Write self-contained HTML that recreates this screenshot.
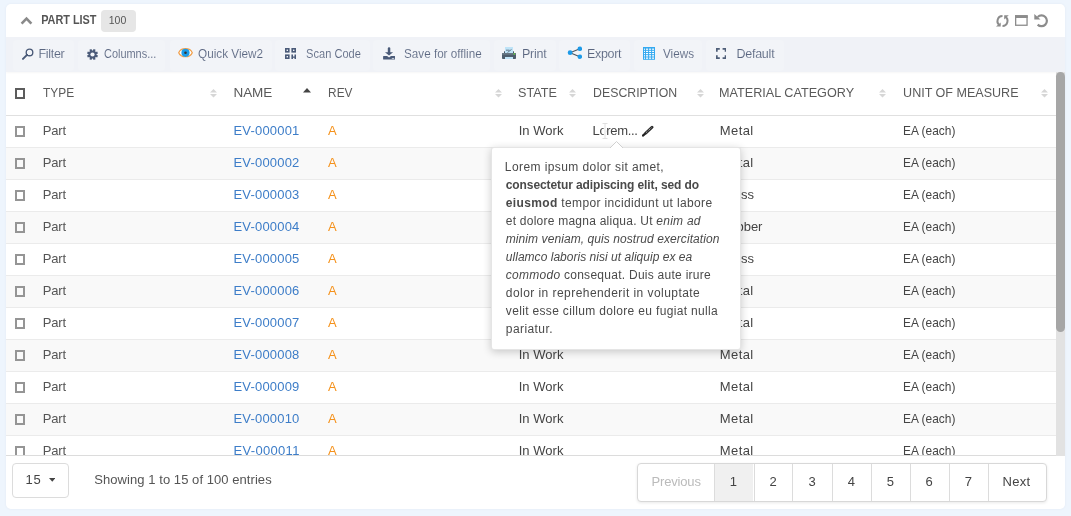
<!DOCTYPE html>
<html><head><meta charset="utf-8">
<style>
*{box-sizing:border-box;margin:0;padding:0}
html,body{width:1071px;height:516px;overflow:hidden;background:#eef5fd;font-family:"Liberation Sans",sans-serif;color:#555}
.card{position:absolute;left:6px;top:4px;width:1059px;height:505px;background:#fff;border-radius:5px;overflow:hidden;box-shadow:0 0 3px rgba(0,40,90,.05)}
.a{position:absolute;white-space:nowrap}
.card{will-change:transform}
</style></head><body>
<div class="card">
<svg class="a" style="left:14px;top:12px" width="13" height="9" viewBox="0 0 13 9"><path d="M1.6 7.6 L6.5 2.6 L11.4 7.6" fill="none" stroke="#8a8a8a" stroke-width="2.6"/></svg>
<div class="a" style="left:34.60px;top:6.05px;font-size:12.5px;font-weight:bold;font-style:normal;letter-spacing:0.000px;color:#555;line-height:20px;transform:scaleX(0.8698);transform-origin:1.00px 0;">PART LIST</div>
<div class="a" style="left:95px;top:6px;width:35px;height:21.5px;background:#e6e6e6;border-radius:4px"></div>
<div class="a" style="left:102.80px;top:6.00px;font-size:10.5px;font-weight:normal;font-style:normal;letter-spacing:-0.050px;color:#555;line-height:20px;">100</div>
<svg class="a" style="left:987px;top:8px" width="60" height="18" viewBox="0 0 60 18">
<g fill="none" stroke="#8c8c8c" stroke-width="2">
<path d="M9.5 4 A5 5 0 0 0 7 13.33"/><path d="M9.5 14 A5 5 0 0 0 12 4.67"/>
<path d="M44.68 4.98 A5.4 5.4 0 1 1 44.68 12.62" stroke-width="2.2"/>
</g>
<path d="M3 14.6 L7.7 14.6 L7.7 10.5 Z M11.2 3.3 L15.8 3.3 L11.2 7.5 Z M41.3 1.9 L41.3 7.5 L47.5 7.5 Z" fill="#8c8c8c"/>
<rect x="22.65" y="3.85" width="11.4" height="9.4" fill="none" stroke="#8c8c8c" stroke-width="1.3"/>
<rect x="22" y="3.2" width="12.7" height="2.8" fill="#8c8c8c"/>
</svg>
<div class="a" style="left:0;top:33.2px;width:1059px;height:35.2px;background:#f0f2f7;box-shadow:0 1px 2px rgba(0,0,0,.035)"></div>
<div class="a" style="left:7px;top:35.5px;width:61px;height:31px;background:#f2f4f8;border-radius:4px"></div>
<div class="a" style="left:72px;top:35.5px;width:87px;height:31px;background:#f2f4f8;border-radius:4px"></div>
<div class="a" style="left:164px;top:35.5px;width:102px;height:31px;background:#f2f4f8;border-radius:4px"></div>
<div class="a" style="left:269px;top:35.5px;width:95px;height:31px;background:#f2f4f8;border-radius:4px"></div>
<div class="a" style="left:367px;top:35.5px;width:117px;height:31px;background:#f2f4f8;border-radius:4px"></div>
<div class="a" style="left:488px;top:35.5px;width:62px;height:31px;background:#f2f4f8;border-radius:4px"></div>
<div class="a" style="left:553px;top:35.5px;width:71px;height:31px;background:#f2f4f8;border-radius:4px"></div>
<div class="a" style="left:628px;top:35.5px;width:67.5px;height:31px;background:#f2f4f8;border-radius:4px"></div>
<div class="a" style="left:699.5px;top:35.5px;width:78.5px;height:31px;background:#f2f4f8;border-radius:4px"></div>
<div class="a" style="left:32.50px;top:40.00px;font-size:12.5px;font-weight:normal;font-style:normal;letter-spacing:-0.300px;color:#5a6680;line-height:20px;-webkit-text-stroke:0.1px #f2f4f8">Filter</div>
<div class="a" style="left:98.40px;top:40.00px;font-size:12.5px;font-weight:normal;font-style:normal;letter-spacing:0.000px;color:#5a6680;line-height:20px;transform:scaleX(0.8746);transform-origin:0.00px 0;-webkit-text-stroke:0.1px #f2f4f8">Columns...</div>
<div class="a" style="left:191.80px;top:40.00px;font-size:12.5px;font-weight:normal;font-style:normal;letter-spacing:0.000px;color:#5a6680;line-height:20px;transform:scaleX(0.9406);transform-origin:0.00px 0;-webkit-text-stroke:0.1px #f2f4f8">Quick View2</div>
<div class="a" style="left:299.80px;top:40.00px;font-size:12.5px;font-weight:normal;font-style:normal;letter-spacing:0.000px;color:#5a6680;line-height:20px;transform:scaleX(0.8852);transform-origin:1.00px 0;-webkit-text-stroke:0.1px #f2f4f8">Scan Code</div>
<div class="a" style="left:397.90px;top:40.00px;font-size:12.5px;font-weight:normal;font-style:normal;letter-spacing:0.000px;color:#5a6680;line-height:20px;transform:scaleX(0.9329);transform-origin:1.00px 0;-webkit-text-stroke:0.1px #f2f4f8">Save for offline</div>
<div class="a" style="left:516.00px;top:40.00px;font-size:12.5px;font-weight:normal;font-style:normal;letter-spacing:-0.275px;color:#5a6680;line-height:20px;-webkit-text-stroke:0.1px #f2f4f8">Print</div>
<div class="a" style="left:581.00px;top:40.00px;font-size:12.5px;font-weight:normal;font-style:normal;letter-spacing:-0.320px;color:#5a6680;line-height:20px;-webkit-text-stroke:0.1px #f2f4f8">Export</div>
<div class="a" style="left:656.50px;top:40.00px;font-size:12.5px;font-weight:normal;font-style:normal;letter-spacing:0.000px;color:#5a6680;line-height:20px;transform:scaleX(0.9364);transform-origin:0.00px 0;-webkit-text-stroke:0.1px #f2f4f8">Views</div>
<div class="a" style="left:730.40px;top:40.00px;font-size:12.5px;font-weight:normal;font-style:normal;letter-spacing:-0.233px;color:#5a6680;line-height:20px;-webkit-text-stroke:0.1px #f2f4f8">Default</div>
<svg class="a" style="left:15px;top:43px" width="13" height="13" viewBox="0 0 13 13"><circle cx="8.5" cy="5.4" r="3.3" fill="none" stroke="#4a5a78" stroke-width="1.35"/><path d="M6 7.9 L2 11.9" stroke="#4a5a78" stroke-width="2" stroke-linecap="round"/></svg>
<svg class="a" style="left:80.8px;top:45px" width="11" height="11" viewBox="0 0 11 11"><g fill="#4a5a78"><circle cx="5.5" cy="5.5" r="4"/><rect x="4.4" y="0" width="2.2" height="11" transform="rotate(22.5 5.5 5.5)"/><rect x="4.4" y="0" width="2.2" height="11" transform="rotate(67.5 5.5 5.5)"/><rect x="4.4" y="0" width="2.2" height="11" transform="rotate(112.5 5.5 5.5)"/><rect x="4.4" y="0" width="2.2" height="11" transform="rotate(157.5 5.5 5.5)"/></g><circle cx="5.5" cy="5.5" r="2.1" fill="#f2f4f8"/></svg>
<svg class="a" style="left:171.5px;top:43.2px" width="15" height="11.4" viewBox="0 0 15 11.4"><path d="M0.7 5.7 C3 0.3, 12 0.3, 14.3 5.7 C12 11.1, 3 11.1, 0.7 5.7 Z" fill="#fff" stroke="#f2a04c" stroke-width="1.2"/><circle cx="7.5" cy="5.8" r="4.1" fill="#1c9ce8"/><circle cx="7.5" cy="5.8" r="1.3" fill="#333"/></svg>
<svg class="a" style="left:279px;top:44px" width="11" height="11" viewBox="0 0 11 11"><g fill="#4a5a78"><rect x="0" y="0" width="4.6" height="4.6"/><rect x="6.4" y="0" width="4.6" height="4.6"/><rect x="0" y="6.4" width="4.6" height="4.6"/><path d="M6.4 6.4 H8 V8.5 H9.5 V6.4 H11 V11 H9.5 V9.8 H8 V11 H6.4 Z"/></g><g fill="#f2f4f8"><rect x="1.6" y="1.6" width="1.4" height="1.4"/><rect x="8" y="1.6" width="1.4" height="1.4"/><rect x="1.6" y="8" width="1.4" height="1.4"/></g></svg>
<svg class="a" style="left:376.8px;top:43px" width="12.2" height="12.7" viewBox="0 0 12.2 12.7"><path d="M4.8 0.9 Q4.8 0.2 6.05 0.2 Q7.3 0.2 7.3 0.9 V5.3 H10.1 L6.05 8.6 L2 5.3 H4.8 Z" fill="#4a5a78"/><path d="M0.6 9 H4.1 L6.05 10.4 L8 9 H11.6 Q12.1 9 12.1 9.5 V12.1 Q12.1 12.6 11.6 12.6 H0.6 Q0.1 12.6 0.1 12.1 V9.5 Q0.1 9 0.6 9 Z" fill="#4a5a78"/><rect x="8.8" y="11" width="2.4" height="0.9" fill="#c8d0dc"/></svg>
<svg class="a" style="left:496px;top:42.8px" width="14" height="12.4" viewBox="0 0 14 12.4"><rect x="3" y="0" width="8" height="7" fill="#bfe4f8"/><path d="M4 3.2 H7.5 M5.5 5.5 L9.5 2.5" stroke="#506070" stroke-width="0.8"/><rect x="2" y="4.3" width="1" height="2" fill="#455565"/><rect x="11" y="4.3" width="1" height="2" fill="#455565"/><rect x="0" y="6.1" width="14" height="6" rx="1" fill="#4d5d6c"/><rect x="0" y="6.1" width="14" height="1.6" fill="#6a7a88"/><rect x="3" y="10" width="8" height="2" fill="#bfe4f8"/><circle cx="12.3" cy="6.9" r="0.9" fill="#5cc040"/></svg>
<svg class="a" style="left:561px;top:42.2px" width="15" height="13.5" viewBox="0 0 15 13.5"><path d="M3.1 6.7 L12.8 2.8 M3.1 6.7 L12.8 10.7" stroke="#4a5560" stroke-width="1.1"/><circle cx="3.1" cy="6.7" r="2.4" fill="#1c9ae8"/><circle cx="12.8" cy="2.8" r="2.3" fill="#1c9ae8"/><circle cx="12.8" cy="10.7" r="2.3" fill="#1c9ae8"/></svg>
<svg class="a" style="left:637px;top:42.8px" width="12" height="12.8" viewBox="0 0 12 12.8"><rect x="0" y="0" width="12" height="12.8" fill="#fff"/><g stroke="#36aaf0" stroke-width="1" fill="none"><rect x="0.5" y="0.5" width="11" height="11.8"/><path d="M2.5 0.5 V12.3"/><path d="M5.6 0.5 V12.3"/><path d="M8.6 0.5 V12.3"/><path d="M0.5 3.3 H11.5"/><path d="M0.5 5.5 H11.5"/><path d="M0.5 7.7 H11.5"/><path d="M0.5 10 H11.5"/></g><rect x="0" y="0" width="12" height="1.6" fill="#36aaf0"/></svg>
<svg class="a" style="left:709.8px;top:44px" width="10.4" height="11" viewBox="0 0 10.4 11"><path d="M0.85 3.8 V0.85 H3.8 M6.6 0.85 H9.55 V3.8 M9.55 7.2 V10.15 H6.6 M3.8 10.15 H0.85 V7.2" fill="none" stroke="#4f5e78" stroke-width="1.7"/></svg>
<div class="a" style="left:9px;top:84px;width:10.3px;height:10.6px;border:2px solid #5c5c5c"></div>
<div class="a" style="left:37.10px;top:79.00px;font-size:13.5px;font-weight:normal;font-style:normal;letter-spacing:0.000px;color:#5a5a5a;line-height:20px;transform:scaleX(0.8829);transform-origin:0.00px 0;">TYPE</div>
<svg class="a" style="left:204.3px;top:85px" width="7" height="8.5" viewBox="0 0 7 8.5"><path d="M3.5 0 L7 3.6 L0 3.6 Z M0 4.9 L7 4.9 L3.5 8.5 Z" fill="#d6d6d6"/></svg>
<div class="a" style="left:227.50px;top:79.00px;font-size:13.5px;font-weight:normal;font-style:normal;letter-spacing:-0.067px;color:#5a5a5a;line-height:20px;">NAME</div>
<div class="a" style="left:321.80px;top:79.00px;font-size:13.5px;font-weight:normal;font-style:normal;letter-spacing:0.000px;color:#5a5a5a;line-height:20px;transform:scaleX(0.8778);transform-origin:1.00px 0;">REV</div>
<svg class="a" style="left:488.5px;top:85px" width="7" height="8.5" viewBox="0 0 7 8.5"><path d="M3.5 0 L7 3.6 L0 3.6 Z M0 4.9 L7 4.9 L3.5 8.5 Z" fill="#d6d6d6"/></svg>
<div class="a" style="left:512.30px;top:79.00px;font-size:13.5px;font-weight:normal;font-style:normal;letter-spacing:0.000px;color:#5a5a5a;line-height:20px;transform:scaleX(0.9350);transform-origin:1.00px 0;">STATE</div>
<svg class="a" style="left:563.4px;top:85px" width="7" height="8.5" viewBox="0 0 7 8.5"><path d="M3.5 0 L7 3.6 L0 3.6 Z M0 4.9 L7 4.9 L3.5 8.5 Z" fill="#d6d6d6"/></svg>
<div class="a" style="left:586.70px;top:79.00px;font-size:13.5px;font-weight:normal;font-style:normal;letter-spacing:0.000px;color:#5a5a5a;line-height:20px;transform:scaleX(0.9110);transform-origin:1.00px 0;">DESCRIPTION</div>
<svg class="a" style="left:690.7px;top:85px" width="7" height="8.5" viewBox="0 0 7 8.5"><path d="M3.5 0 L7 3.6 L0 3.6 Z M0 4.9 L7 4.9 L3.5 8.5 Z" fill="#d6d6d6"/></svg>
<div class="a" style="left:713.40px;top:79.00px;font-size:13.5px;font-weight:normal;font-style:normal;letter-spacing:0.000px;color:#5a5a5a;line-height:20px;transform:scaleX(0.9357);transform-origin:1.00px 0;">MATERIAL CATEGORY</div>
<svg class="a" style="left:873.4px;top:85px" width="7" height="8.5" viewBox="0 0 7 8.5"><path d="M3.5 0 L7 3.6 L0 3.6 Z M0 4.9 L7 4.9 L3.5 8.5 Z" fill="#d6d6d6"/></svg>
<div class="a" style="left:896.50px;top:79.00px;font-size:13.5px;font-weight:normal;font-style:normal;letter-spacing:0.000px;color:#5a5a5a;line-height:20px;transform:scaleX(0.9293);transform-origin:1.00px 0;">UNIT OF MEASURE</div>
<svg class="a" style="left:1035.1px;top:85px" width="7" height="8.5" viewBox="0 0 7 8.5"><path d="M3.5 0 L7 3.6 L0 3.6 Z M0 4.9 L7 4.9 L3.5 8.5 Z" fill="#d6d6d6"/></svg>
<svg class="a" style="left:297.4px;top:84.3px" width="8" height="4.5" viewBox="0 0 8 4.5"><path d="M4 0 L8 4.5 L0 4.5 Z" fill="#444"/></svg>
<div class="a" style="left:0;top:110.5px;width:1050px;height:1px;background:#e0e0e0"></div>
<div class="a" style="left:0;top:111.5px;width:1050px;height:339.5px;overflow:hidden">
<div class="a" style="left:0;top:0px;width:1050px;height:32px;background:#fff;border-bottom:1px solid #ebebeb"></div>
<div class="a" style="left:9px;top:10.5px;width:10px;height:10.5px;border:2px solid #959595"></div>
<div class="a" style="left:36.70px;top:5.60px;font-size:13px;font-weight:normal;font-style:normal;letter-spacing:-0.167px;color:#555;line-height:20px;">Part</div>
<div class="a" style="left:227.50px;top:5.60px;font-size:13px;font-weight:normal;font-style:normal;letter-spacing:0.188px;color:#3d7dc8;line-height:20px;">EV-000001</div>
<div class="a" style="left:321.90px;top:5.60px;font-size:13px;font-weight:normal;font-style:normal;letter-spacing:0.000px;color:#f5921c;line-height:20px;">A</div>
<div class="a" style="left:512.70px;top:5.60px;font-size:13px;font-weight:normal;font-style:normal;letter-spacing:0.033px;color:#444;line-height:20px;">In Work</div>
<div class="a" style="left:586.60px;top:5.60px;font-size:13px;font-weight:normal;font-style:normal;letter-spacing:-0.343px;color:#444;line-height:20px;">Lorem...</div>
<svg class="a" style="left:636px;top:9.5px" width="12" height="12" viewBox="0 0 12 12"><path d="M0.9 10.6 L2.6 9.1" stroke="#222" stroke-width="2.2" stroke-linecap="round"/><path d="M3.6 8.2 L10 2.3" stroke="#2a2a2a" stroke-width="2.9" stroke-linecap="round"/><path d="M4.2 7.5 L9.4 2.7" stroke="#ccc" stroke-width="0.9" stroke-dasharray="1.1 0.9"/></svg>
<svg class="a" style="left:594px;top:6.5px" width="10" height="18" viewBox="0 0 10 18"><path d="M2 1.5 H8 M5 1.5 V16.5 M2 16.5 H8" fill="none" stroke="#fff" stroke-width="2.6"/><path d="M2.5 1.5 H7.5 M5 1.5 V16.5 M2.5 16.5 H7.5" fill="none" stroke="#d8d8d8" stroke-width="0.8"/></svg>
<div class="a" style="left:713.80px;top:5.60px;font-size:13px;font-weight:normal;font-style:normal;letter-spacing:0.400px;color:#444;line-height:20px;">Metal</div>
<div class="a" style="left:896.80px;top:5.60px;font-size:13px;font-weight:normal;font-style:normal;letter-spacing:0.000px;color:#444;line-height:20px;transform:scaleX(0.9161);transform-origin:1.00px 0;">EA (each)</div>
<div class="a" style="left:0;top:32px;width:1050px;height:32px;background:#f9f9f9;border-bottom:1px solid #ebebeb"></div>
<div class="a" style="left:9px;top:42.5px;width:10px;height:10.5px;border:2px solid #959595"></div>
<div class="a" style="left:36.70px;top:37.60px;font-size:13px;font-weight:normal;font-style:normal;letter-spacing:-0.167px;color:#555;line-height:20px;">Part</div>
<div class="a" style="left:227.50px;top:37.60px;font-size:13px;font-weight:normal;font-style:normal;letter-spacing:0.188px;color:#3d7dc8;line-height:20px;">EV-000002</div>
<div class="a" style="left:321.90px;top:37.60px;font-size:13px;font-weight:normal;font-style:normal;letter-spacing:0.000px;color:#f5921c;line-height:20px;">A</div>
<div class="a" style="left:512.70px;top:37.60px;font-size:13px;font-weight:normal;font-style:normal;letter-spacing:0.033px;color:#444;line-height:20px;">In Work</div>
<div class="a" style="left:713.80px;top:37.60px;font-size:13px;font-weight:normal;font-style:normal;letter-spacing:0.400px;color:#444;line-height:20px;">Metal</div>
<div class="a" style="left:896.80px;top:37.60px;font-size:13px;font-weight:normal;font-style:normal;letter-spacing:0.000px;color:#444;line-height:20px;transform:scaleX(0.9161);transform-origin:1.00px 0;">EA (each)</div>
<div class="a" style="left:0;top:64px;width:1050px;height:32px;background:#fff;border-bottom:1px solid #ebebeb"></div>
<div class="a" style="left:9px;top:74.5px;width:10px;height:10.5px;border:2px solid #959595"></div>
<div class="a" style="left:36.70px;top:69.60px;font-size:13px;font-weight:normal;font-style:normal;letter-spacing:-0.167px;color:#555;line-height:20px;">Part</div>
<div class="a" style="left:227.50px;top:69.60px;font-size:13px;font-weight:normal;font-style:normal;letter-spacing:0.188px;color:#3d7dc8;line-height:20px;">EV-000003</div>
<div class="a" style="left:321.90px;top:69.60px;font-size:13px;font-weight:normal;font-style:normal;letter-spacing:0.000px;color:#f5921c;line-height:20px;">A</div>
<div class="a" style="left:512.70px;top:69.60px;font-size:13px;font-weight:normal;font-style:normal;letter-spacing:0.033px;color:#444;line-height:20px;">In Work</div>
<div class="a" style="left:714.80px;top:69.60px;font-size:13px;font-weight:normal;font-style:normal;letter-spacing:0.000px;color:#444;line-height:20px;">Glass</div>
<div class="a" style="left:896.80px;top:69.60px;font-size:13px;font-weight:normal;font-style:normal;letter-spacing:0.000px;color:#444;line-height:20px;transform:scaleX(0.9161);transform-origin:1.00px 0;">EA (each)</div>
<div class="a" style="left:0;top:96px;width:1050px;height:32px;background:#f9f9f9;border-bottom:1px solid #ebebeb"></div>
<div class="a" style="left:9px;top:106.5px;width:10px;height:10.5px;border:2px solid #959595"></div>
<div class="a" style="left:36.70px;top:101.60px;font-size:13px;font-weight:normal;font-style:normal;letter-spacing:-0.167px;color:#555;line-height:20px;">Part</div>
<div class="a" style="left:227.50px;top:101.60px;font-size:13px;font-weight:normal;font-style:normal;letter-spacing:0.188px;color:#3d7dc8;line-height:20px;">EV-000004</div>
<div class="a" style="left:321.90px;top:101.60px;font-size:13px;font-weight:normal;font-style:normal;letter-spacing:0.000px;color:#f5921c;line-height:20px;">A</div>
<div class="a" style="left:512.70px;top:101.60px;font-size:13px;font-weight:normal;font-style:normal;letter-spacing:0.033px;color:#444;line-height:20px;">In Work</div>
<div class="a" style="left:713.80px;top:101.60px;font-size:13px;font-weight:normal;font-style:normal;letter-spacing:0.000px;color:#444;line-height:20px;">Rubber</div>
<div class="a" style="left:896.80px;top:101.60px;font-size:13px;font-weight:normal;font-style:normal;letter-spacing:0.000px;color:#444;line-height:20px;transform:scaleX(0.9161);transform-origin:1.00px 0;">EA (each)</div>
<div class="a" style="left:0;top:128px;width:1050px;height:32px;background:#fff;border-bottom:1px solid #ebebeb"></div>
<div class="a" style="left:9px;top:138.5px;width:10px;height:10.5px;border:2px solid #959595"></div>
<div class="a" style="left:36.70px;top:133.60px;font-size:13px;font-weight:normal;font-style:normal;letter-spacing:-0.167px;color:#555;line-height:20px;">Part</div>
<div class="a" style="left:227.50px;top:133.60px;font-size:13px;font-weight:normal;font-style:normal;letter-spacing:0.188px;color:#3d7dc8;line-height:20px;">EV-000005</div>
<div class="a" style="left:321.90px;top:133.60px;font-size:13px;font-weight:normal;font-style:normal;letter-spacing:0.000px;color:#f5921c;line-height:20px;">A</div>
<div class="a" style="left:512.70px;top:133.60px;font-size:13px;font-weight:normal;font-style:normal;letter-spacing:0.033px;color:#444;line-height:20px;">In Work</div>
<div class="a" style="left:714.80px;top:133.60px;font-size:13px;font-weight:normal;font-style:normal;letter-spacing:0.000px;color:#444;line-height:20px;">Glass</div>
<div class="a" style="left:896.80px;top:133.60px;font-size:13px;font-weight:normal;font-style:normal;letter-spacing:0.000px;color:#444;line-height:20px;transform:scaleX(0.9161);transform-origin:1.00px 0;">EA (each)</div>
<div class="a" style="left:0;top:160px;width:1050px;height:32px;background:#f9f9f9;border-bottom:1px solid #ebebeb"></div>
<div class="a" style="left:9px;top:170.5px;width:10px;height:10.5px;border:2px solid #959595"></div>
<div class="a" style="left:36.70px;top:165.60px;font-size:13px;font-weight:normal;font-style:normal;letter-spacing:-0.167px;color:#555;line-height:20px;">Part</div>
<div class="a" style="left:227.50px;top:165.60px;font-size:13px;font-weight:normal;font-style:normal;letter-spacing:0.188px;color:#3d7dc8;line-height:20px;">EV-000006</div>
<div class="a" style="left:321.90px;top:165.60px;font-size:13px;font-weight:normal;font-style:normal;letter-spacing:0.000px;color:#f5921c;line-height:20px;">A</div>
<div class="a" style="left:512.70px;top:165.60px;font-size:13px;font-weight:normal;font-style:normal;letter-spacing:0.033px;color:#444;line-height:20px;">In Work</div>
<div class="a" style="left:713.80px;top:165.60px;font-size:13px;font-weight:normal;font-style:normal;letter-spacing:0.400px;color:#444;line-height:20px;">Metal</div>
<div class="a" style="left:896.80px;top:165.60px;font-size:13px;font-weight:normal;font-style:normal;letter-spacing:0.000px;color:#444;line-height:20px;transform:scaleX(0.9161);transform-origin:1.00px 0;">EA (each)</div>
<div class="a" style="left:0;top:192px;width:1050px;height:32px;background:#fff;border-bottom:1px solid #ebebeb"></div>
<div class="a" style="left:9px;top:202.5px;width:10px;height:10.5px;border:2px solid #959595"></div>
<div class="a" style="left:36.70px;top:197.60px;font-size:13px;font-weight:normal;font-style:normal;letter-spacing:-0.167px;color:#555;line-height:20px;">Part</div>
<div class="a" style="left:227.50px;top:197.60px;font-size:13px;font-weight:normal;font-style:normal;letter-spacing:0.188px;color:#3d7dc8;line-height:20px;">EV-000007</div>
<div class="a" style="left:321.90px;top:197.60px;font-size:13px;font-weight:normal;font-style:normal;letter-spacing:0.000px;color:#f5921c;line-height:20px;">A</div>
<div class="a" style="left:512.70px;top:197.60px;font-size:13px;font-weight:normal;font-style:normal;letter-spacing:0.033px;color:#444;line-height:20px;">In Work</div>
<div class="a" style="left:713.80px;top:197.60px;font-size:13px;font-weight:normal;font-style:normal;letter-spacing:0.400px;color:#444;line-height:20px;">Metal</div>
<div class="a" style="left:896.80px;top:197.60px;font-size:13px;font-weight:normal;font-style:normal;letter-spacing:0.000px;color:#444;line-height:20px;transform:scaleX(0.9161);transform-origin:1.00px 0;">EA (each)</div>
<div class="a" style="left:0;top:224px;width:1050px;height:32px;background:#f9f9f9;border-bottom:1px solid #ebebeb"></div>
<div class="a" style="left:9px;top:234.5px;width:10px;height:10.5px;border:2px solid #959595"></div>
<div class="a" style="left:36.70px;top:229.60px;font-size:13px;font-weight:normal;font-style:normal;letter-spacing:-0.167px;color:#555;line-height:20px;">Part</div>
<div class="a" style="left:227.50px;top:229.60px;font-size:13px;font-weight:normal;font-style:normal;letter-spacing:0.188px;color:#3d7dc8;line-height:20px;">EV-000008</div>
<div class="a" style="left:321.90px;top:229.60px;font-size:13px;font-weight:normal;font-style:normal;letter-spacing:0.000px;color:#f5921c;line-height:20px;">A</div>
<div class="a" style="left:512.70px;top:229.60px;font-size:13px;font-weight:normal;font-style:normal;letter-spacing:0.033px;color:#444;line-height:20px;">In Work</div>
<div class="a" style="left:713.80px;top:229.60px;font-size:13px;font-weight:normal;font-style:normal;letter-spacing:0.400px;color:#444;line-height:20px;">Metal</div>
<div class="a" style="left:896.80px;top:229.60px;font-size:13px;font-weight:normal;font-style:normal;letter-spacing:0.000px;color:#444;line-height:20px;transform:scaleX(0.9161);transform-origin:1.00px 0;">EA (each)</div>
<div class="a" style="left:0;top:256px;width:1050px;height:32px;background:#fff;border-bottom:1px solid #ebebeb"></div>
<div class="a" style="left:9px;top:266.5px;width:10px;height:10.5px;border:2px solid #959595"></div>
<div class="a" style="left:36.70px;top:261.60px;font-size:13px;font-weight:normal;font-style:normal;letter-spacing:-0.167px;color:#555;line-height:20px;">Part</div>
<div class="a" style="left:227.50px;top:261.60px;font-size:13px;font-weight:normal;font-style:normal;letter-spacing:0.188px;color:#3d7dc8;line-height:20px;">EV-000009</div>
<div class="a" style="left:321.90px;top:261.60px;font-size:13px;font-weight:normal;font-style:normal;letter-spacing:0.000px;color:#f5921c;line-height:20px;">A</div>
<div class="a" style="left:512.70px;top:261.60px;font-size:13px;font-weight:normal;font-style:normal;letter-spacing:0.033px;color:#444;line-height:20px;">In Work</div>
<div class="a" style="left:713.80px;top:261.60px;font-size:13px;font-weight:normal;font-style:normal;letter-spacing:0.400px;color:#444;line-height:20px;">Metal</div>
<div class="a" style="left:896.80px;top:261.60px;font-size:13px;font-weight:normal;font-style:normal;letter-spacing:0.000px;color:#444;line-height:20px;transform:scaleX(0.9161);transform-origin:1.00px 0;">EA (each)</div>
<div class="a" style="left:0;top:288px;width:1050px;height:32px;background:#f9f9f9;border-bottom:1px solid #ebebeb"></div>
<div class="a" style="left:9px;top:298.5px;width:10px;height:10.5px;border:2px solid #959595"></div>
<div class="a" style="left:36.70px;top:293.60px;font-size:13px;font-weight:normal;font-style:normal;letter-spacing:-0.167px;color:#555;line-height:20px;">Part</div>
<div class="a" style="left:227.50px;top:293.60px;font-size:13px;font-weight:normal;font-style:normal;letter-spacing:0.188px;color:#3d7dc8;line-height:20px;">EV-000010</div>
<div class="a" style="left:321.90px;top:293.60px;font-size:13px;font-weight:normal;font-style:normal;letter-spacing:0.000px;color:#f5921c;line-height:20px;">A</div>
<div class="a" style="left:512.70px;top:293.60px;font-size:13px;font-weight:normal;font-style:normal;letter-spacing:0.033px;color:#444;line-height:20px;">In Work</div>
<div class="a" style="left:713.80px;top:293.60px;font-size:13px;font-weight:normal;font-style:normal;letter-spacing:0.400px;color:#444;line-height:20px;">Metal</div>
<div class="a" style="left:896.80px;top:293.60px;font-size:13px;font-weight:normal;font-style:normal;letter-spacing:0.000px;color:#444;line-height:20px;transform:scaleX(0.9161);transform-origin:1.00px 0;">EA (each)</div>
<div class="a" style="left:0;top:320px;width:1050px;height:32px;background:#fff;border-bottom:1px solid #ebebeb"></div>
<div class="a" style="left:9px;top:330.5px;width:10px;height:10.5px;border:2px solid #959595"></div>
<div class="a" style="left:36.70px;top:325.60px;font-size:13px;font-weight:normal;font-style:normal;letter-spacing:-0.167px;color:#555;line-height:20px;">Part</div>
<div class="a" style="left:227.50px;top:325.60px;font-size:13px;font-weight:normal;font-style:normal;letter-spacing:0.312px;color:#3d7dc8;line-height:20px;">EV-000011</div>
<div class="a" style="left:321.90px;top:325.60px;font-size:13px;font-weight:normal;font-style:normal;letter-spacing:0.000px;color:#f5921c;line-height:20px;">A</div>
<div class="a" style="left:512.70px;top:325.60px;font-size:13px;font-weight:normal;font-style:normal;letter-spacing:0.033px;color:#444;line-height:20px;">In Work</div>
<div class="a" style="left:713.80px;top:325.60px;font-size:13px;font-weight:normal;font-style:normal;letter-spacing:0.400px;color:#444;line-height:20px;">Metal</div>
<div class="a" style="left:896.80px;top:325.60px;font-size:13px;font-weight:normal;font-style:normal;letter-spacing:0.000px;color:#444;line-height:20px;transform:scaleX(0.9161);transform-origin:1.00px 0;">EA (each)</div>
</div>
<div class="a" style="left:0;top:451px;width:1050px;height:1px;background:#dcdcdc"></div>
<div class="a" style="left:1050px;top:68px;width:9px;height:384px;background:#e2e2e2"></div>
<div class="a" style="left:1050px;top:68px;width:9px;height:259.5px;background:#a6a6a6;border-radius:4.5px"></div>
<div class="a" style="left:485px;top:143px;width:249.5px;height:203.3px;background:#fff;border:1px solid rgba(0,0,0,.10);border-radius:3px;box-shadow:0 2px 8px rgba(0,0,0,.20)"></div>
<svg class="a" style="left:603px;top:137px" width="15" height="8" viewBox="0 0 15 8"><path d="M0.5 7.5 L7.5 0.5 L14.5 7.5" fill="#fff" stroke="#d0d0d0" stroke-width="1"/><rect x="0" y="7" width="15" height="2" fill="#fff"/></svg>
<div class="a" style="left:498.80px;top:152.80px;font-size:12px;font-weight:normal;font-style:normal;letter-spacing:0.415px;color:#4a4a4a;line-height:20px;">Lorem ipsum dolor sit amet,</div>
<div class="a" style="left:499.80px;top:170.80px;font-size:12px;font-weight:normal;font-style:normal;letter-spacing:-0.100px;color:#4a4a4a;line-height:20px;"><b>consectetur adipiscing elit, sed do</b></div>
<div class="a" style="left:499.80px;top:188.80px;font-size:12px;font-weight:normal;font-style:normal;letter-spacing:0.359px;color:#4a4a4a;line-height:20px;"><b>eiusmod</b> tempor incididunt ut labore</div>
<div class="a" style="left:499.80px;top:206.80px;font-size:12px;font-weight:normal;font-style:normal;letter-spacing:0.239px;color:#4a4a4a;line-height:20px;">et dolore magna aliqua. Ut <i>enim ad</i></div>
<div class="a" style="left:499.80px;top:224.80px;font-size:12px;font-weight:normal;font-style:normal;letter-spacing:0.074px;color:#4a4a4a;line-height:20px;"><i>minim veniam, quis nostrud exercitation</i></div>
<div class="a" style="left:499.80px;top:242.80px;font-size:12px;font-weight:normal;font-style:normal;letter-spacing:0.028px;color:#4a4a4a;line-height:20px;"><i>ullamco laboris nisi ut aliquip ex ea</i></div>
<div class="a" style="left:499.80px;top:260.80px;font-size:12px;font-weight:normal;font-style:normal;letter-spacing:0.267px;color:#4a4a4a;line-height:20px;"><i>commodo</i> consequat. Duis aute irure</div>
<div class="a" style="left:499.80px;top:278.80px;font-size:12px;font-weight:normal;font-style:normal;letter-spacing:0.447px;color:#4a4a4a;line-height:20px;">dolor in reprehenderit in voluptate</div>
<div class="a" style="left:499.80px;top:296.80px;font-size:12px;font-weight:normal;font-style:normal;letter-spacing:0.338px;color:#4a4a4a;line-height:20px;">velit esse cillum dolore eu fugiat nulla</div>
<div class="a" style="left:499.80px;top:314.80px;font-size:12px;font-weight:normal;font-style:normal;letter-spacing:0.413px;color:#4a4a4a;line-height:20px;">pariatur.</div>
<div class="a" style="left:6.300000000000001px;top:459px;width:56.5px;height:35px;border:1px solid #dcdcdc;border-radius:4px"></div>
<div class="a" style="left:19.50px;top:465.90px;font-size:13px;font-weight:normal;font-style:normal;letter-spacing:0.700px;color:#444;line-height:20px;">15</div>
<svg class="a" style="left:42.9px;top:474.3px" width="6.5" height="3.7" viewBox="0 0 6.5 3.7"><path d="M0 0 H6.5 L3.25 3.7 Z" fill="#444"/></svg>
<div class="a" style="left:88.30px;top:465.90px;font-size:13px;font-weight:normal;font-style:normal;letter-spacing:0.059px;color:#555;line-height:20px;">Showing 1 to 15 of 100 entries</div>
<div class="a" style="left:630.5px;top:459.3px;width:410.0px;height:38.6px;border:1px solid #d8d8d8;border-radius:4px;box-shadow:0 1px 3px rgba(0,0,0,.09);overflow:hidden;background:#fff"></div>
<div class="a" style="left:708.2px;top:460.3px;width:39.299999999999955px;height:36.6px;background:#f0f0f0"></div>
<div class="a" style="left:708.2px;top:460.3px;width:1px;height:36.6px;background:#dcdcdc"></div>
<div class="a" style="left:747.5px;top:460.3px;width:1px;height:36.6px;background:#dcdcdc"></div>
<div class="a" style="left:786.4px;top:460.3px;width:1px;height:36.6px;background:#dcdcdc"></div>
<div class="a" style="left:825.7px;top:460.3px;width:1px;height:36.6px;background:#dcdcdc"></div>
<div class="a" style="left:864.6px;top:460.3px;width:1px;height:36.6px;background:#dcdcdc"></div>
<div class="a" style="left:903.7px;top:460.3px;width:1px;height:36.6px;background:#dcdcdc"></div>
<div class="a" style="left:942.5px;top:460.3px;width:1px;height:36.6px;background:#dcdcdc"></div>
<div class="a" style="left:981.8px;top:460.3px;width:1px;height:36.6px;background:#dcdcdc"></div>
<div class="a" style="left:645.50px;top:467.90px;font-size:13px;font-weight:normal;font-style:normal;letter-spacing:-0.171px;color:#bbb;line-height:20px;">Previous</div>
<div class="a" style="left:996.60px;top:467.90px;font-size:13px;font-weight:normal;font-style:normal;letter-spacing:0.233px;color:#444;line-height:20px;">Next</div>
<div class="a" style="left:723.85px;top:467.90px;font-size:13px;font-weight:normal;font-style:normal;letter-spacing:0.000px;color:#444;line-height:20px;">1</div>
<div class="a" style="left:763.45px;top:467.90px;font-size:13px;font-weight:normal;font-style:normal;letter-spacing:0.000px;color:#444;line-height:20px;">2</div>
<div class="a" style="left:802.55px;top:467.90px;font-size:13px;font-weight:normal;font-style:normal;letter-spacing:0.000px;color:#444;line-height:20px;">3</div>
<div class="a" style="left:841.65px;top:467.90px;font-size:13px;font-weight:normal;font-style:normal;letter-spacing:0.000px;color:#444;line-height:20px;">4</div>
<div class="a" style="left:880.65px;top:467.90px;font-size:13px;font-weight:normal;font-style:normal;letter-spacing:0.000px;color:#444;line-height:20px;">5</div>
<div class="a" style="left:919.60px;top:467.90px;font-size:13px;font-weight:normal;font-style:normal;letter-spacing:0.000px;color:#444;line-height:20px;">6</div>
<div class="a" style="left:958.65px;top:467.90px;font-size:13px;font-weight:normal;font-style:normal;letter-spacing:0.000px;color:#444;line-height:20px;">7</div>
</div></body></html>
